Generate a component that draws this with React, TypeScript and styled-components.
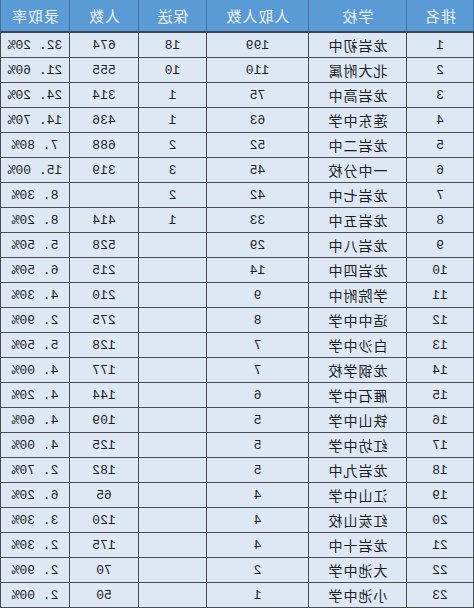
import React from "react";
import styled, { createGlobalStyle } from "styled-components";

const Global = createGlobalStyle`
  html, body { margin: 0; padding: 0; background: #ffffff; }
  body { width: 474px; height: 608px; overflow: hidden; }
`;

const COLS = "68px 98px 102px 68px 69px 69px";
const LINE = "#4a4c50";

const Sheet = styled.div`
  width: 474px;
  display: flex;
  flex-direction: column;
  transform: scaleX(-1);
  background: #dde8f4;
`;

const HeadRow = styled.div`
  display: grid;
  grid-template-columns: ${COLS};
  height: 33px;
  background: #5b9bd5;
  border-bottom: 2px solid #3e4650;
  box-sizing: border-box;
`;

const HeadCell = styled.div<{ $first?: boolean }>`
  display: flex;
  align-items: center;
  justify-content: center;
  border-right: 1.5px solid #41709f;
  border-left: ${(p) => (p.$first ? "1.5px solid #41709f" : "none")};
  color: #e6edf6;
  font-family: "Noto Sans CJK SC", sans-serif;
  font-size: 15px;
  letter-spacing: 1px;
`;

const Row = styled.div`
  display: grid;
  grid-template-columns: ${COLS};
  height: 25px;
  border-bottom: 1.5px solid ${LINE};
  box-sizing: border-box;
`;

const Cell = styled.div<{ $first?: boolean; $cjk?: boolean }>`
  display: flex;
  align-items: center;
  justify-content: center;
  border-right: 1.5px solid ${LINE};
  border-left: ${(p) => (p.$first ? `1.5px solid ${LINE}` : "none")};
  color: #1e1e1e;
  font-family: ${(p) =>
    p.$cjk ? `"Noto Sans CJK SC", sans-serif` : `"Liberation Mono", monospace`};
  font-size: ${(p) => (p.$cjk ? "14px" : "13px")};
  letter-spacing: ${(p) => (p.$cjk ? "1px" : "0")};
  white-space: pre;
`;

type R = [number, string, string, string, string, string];

const rows: R[] = [
  [1, "龙岩初中", "199", "18", "674", "32.20%"],
  [2, "北大附属", "110", "10", "555", "21.60%"],
  [3, "龙岩高中", "75", "1", "314", "24.20%"],
  [4, "莲东中学", "63", "1", "436", "14.70%"],
  [5, "龙岩二中", "52", "2", "688", "7.80%"],
  [6, "一中分校", "45", "3", "319", "15.00%"],
  [7, "龙岩七中", "42", "2", "", "8.30%"],
  [8, "龙岩五中", "33", "1", "414", "8.20%"],
  [9, "龙岩八中", "29", "", "528", "5.50%"],
  [10, "龙岩四中", "14", "", "215", "6.50%"],
  [11, "学院附中", "9", "", "210", "4.30%"],
  [12, "适中中学", "8", "", "275", "2.90%"],
  [13, "白沙中学", "7", "", "128", "5.50%"],
  [14, "龙钢学校", "7", "", "177", "4.00%"],
  [15, "雁石中学", "6", "", "144", "4.20%"],
  [16, "铁山中学", "5", "", "109", "4.60%"],
  [17, "红坊中学", "5", "", "125", "4.00%"],
  [18, "龙岩九中", "5", "", "182", "2.70%"],
  [19, "江山中学", "4", "", "65", "6.20%"],
  [20, "红炭山校", "4", "", "120", "3.30%"],
  [21, "龙岩十中", "4", "", "175", "2.30%"],
  [22, "大池中学", "2", "", "70", "2.90%"],
  [23, "小池中学", "1", "", "50", "2.00%"],
];

const headers = ["排名", "学校", "人取人数", "保送", "人数", "录取率"];

const fmt = (s: string) => s.replace(".", ". ");

export default function App() {
  return (
    <>
      <Global />
      <Sheet>
        <HeadRow>
          {headers.map((h, i) => (
            <HeadCell key={h} $first={i === 0}>
              {h}
            </HeadCell>
          ))}
        </HeadRow>
        {rows.map((r) => (
          <Row key={r[0]}>
            <Cell $first>{r[0]}</Cell>
            <Cell $cjk>{r[1]}</Cell>
            <Cell>{r[2]}</Cell>
            <Cell>{r[3]}</Cell>
            <Cell>{r[4]}</Cell>
            <Cell>{fmt(r[5])}</Cell>
          </Row>
        ))}
      </Sheet>
    </>
  );
}
